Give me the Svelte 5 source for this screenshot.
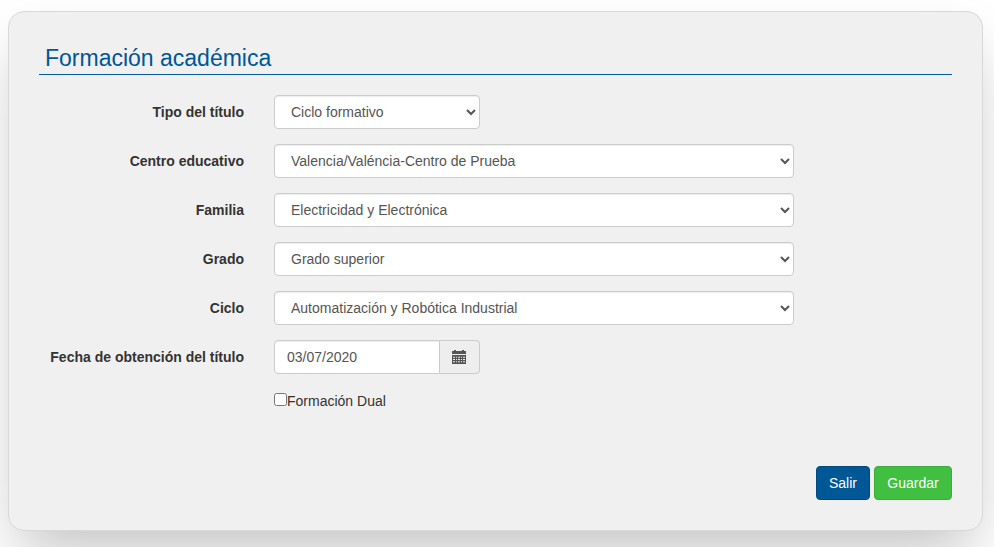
<script>
  const fields = [
    { id: 'tipo', label: 'Tipo del título', value: 'Ciclo formativo', size: 'short' },
    { id: 'centro', label: 'Centro educativo', value: 'Valencia/Valéncia-Centro de Prueba', size: 'long' },
    { id: 'familia', label: 'Familia', value: 'Electricidad y Electrónica', size: 'long' },
    { id: 'grado', label: 'Grado', value: 'Grado superior', size: 'long' },
    { id: 'ciclo', label: 'Ciclo', value: 'Automatización y Robótica Industrial', size: 'long' }
  ];
  let fecha = $state('03/07/2020');
  let dual = $state(false);
</script>

<div class="page">
  <main class="card">
    <h1>Formación académica</h1>
    <form onsubmit={(e) => e.preventDefault()}>
      {#each fields as field (field.id)}
        <div class="row">
          <label class="name" for={field.id}>{field.label}</label>
          <div class={['cell', field.size]}>
            <select id={field.id} class="control">
              <option>{field.value}</option>
            </select>
          </div>
        </div>
      {/each}
      <div class="row">
        <label class="name" for="fecha">Fecha de obtención del título</label>
        <div class="cell short group">
          <input id="fecha" class="control date" type="text" bind:value={fecha} />
          <button class="addon" type="button" aria-label="Abrir calendario">
            <svg width="14" height="14" viewBox="0 0 14 14" fill="#555" aria-hidden="true">
              <path d="M2 0h2v1h6V0h2v1h2v3H0V1h2z" />
              <path
                fill-rule="evenodd"
                d="M0 5h14v9H0zM1 6.8v1h2v-1zM4 6.8v1h1v-1zM6 6.8v1h2v-1zM9 6.8v1h1v-1zM11 6.8v1h2v-1zM1 9v1h2v-1zM4 9v1h1v-1zM6 9v1h2v-1zM9 9v1h1v-1zM11 9v1h2v-1zM1 11.2v1h2v-1zM4 11.2v1h1v-1zM6 11.2v1h2v-1zM9 11.2v1h1v-1zM11 11.2v1h2v-1z"
              />
            </svg>
          </button>
        </div>
      </div>
      <div class="row">
        <span class="name"></span>
        <label class="check"><input type="checkbox" bind:checked={dual} />Formación Dual</label>
      </div>
      <div class="actions">
        <button class="btn exit" type="button">Salir</button>
        <button class="btn save" type="submit">Guardar</button>
      </div>
    </form>
  </main>
</div>

<style>
  :global(body) {
    background: #fff;
  }
  .page,
  .page * {
    box-sizing: border-box;
  }
  .page {
    min-height: 100vh;
    padding: 11px 11px 16px 8px;
    overflow: hidden;
  }
  .card {
    padding: 30px;
    border: 1px solid #d8d8d8;
    border-radius: 16px;
    background: #f0f0f0;
    box-shadow: 0 30px 60px -10px rgba(0, 0, 0, 0.24);
    color: #333;
    font: 14px/20px 'Liberation Sans', Arial, sans-serif;
  }
  h1 {
    margin: 0 0 20px;
    padding: 0 6px;
    border-bottom: 1px solid #005a9c;
    color: #005796;
    font-size: 23px;
    font-weight: 400;
    line-height: 32px;
  }
  .row {
    display: flex;
    margin: 0 -15px 15px;
  }
  .name {
    display: flex;
    flex: none;
    justify-content: flex-end;
    width: 235px;
    padding: 7px 15px 0;
    font-weight: 700;
    text-align: right;
    white-space: nowrap;
  }
  .cell {
    padding: 0 15px;
  }
  .short {
    width: 25%;
  }
  .long {
    width: 58.3333%;
  }
  .control {
    display: block;
    width: 100%;
    height: 34px;
    margin: 0;
    padding: 6px 12px;
    border: 1px solid #ccc;
    border-radius: 4px;
    background-color: #fff;
    box-shadow: inset 0 1px 1px rgba(0, 0, 0, 0.075);
    color: #555;
    font: inherit;
  }
  .group {
    display: flex;
  }
  .date {
    flex: 1;
    min-width: 0;
    border-radius: 4px 0 0 4px;
  }
  .addon {
    display: flex;
    align-items: center;
    justify-content: center;
    width: 40px;
    height: 34px;
    padding: 0;
    border: 1px solid #ccc;
    border-left: 0;
    border-radius: 0 4px 4px 0;
    background: #eee;
  }
  .check {
    display: flex;
    align-items: flex-start;
    padding: 2px 15px 0;
  }
  .check input {
    width: 13px;
    height: 13px;
    margin: 2px 0 0;
  }
  .actions {
    display: flex;
    justify-content: flex-end;
    gap: 4px;
    padding-top: 40px;
  }
  .btn {
    height: 34px;
    padding: 6px 12px;
    border: 1px solid;
    border-radius: 4px;
    color: #fff;
    font: inherit;
    cursor: pointer;
  }
  .exit {
    border-color: #004a80;
    background: #005796;
  }
  .save {
    min-width: 78px;
    border-color: #39ac39;
    background: #40bf40;
  }
</style>
